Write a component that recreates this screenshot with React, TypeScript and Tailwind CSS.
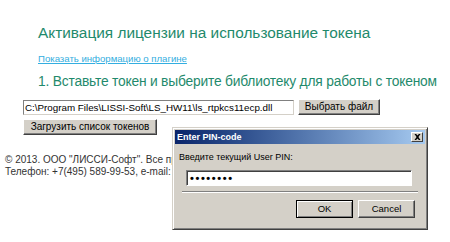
export default function App() {
  const btn =
    "bg-[#d4d0c8] text-[10px] leading-[12px] text-black whitespace-nowrap border border-t-white border-l-white border-r-[#404040] border-b-[#404040] shadow-[inset_-1px_-1px_0_#808080]";

  return (
    <div className="relative w-[450px] h-[242px] overflow-hidden bg-white font-['Liberation_Sans',Arial,sans-serif]">
      <div className="flex flex-col items-start">
        <h1 className="ml-[38px] mt-[24px] text-[15.4px] leading-[18px] text-[#1f8a6c] whitespace-nowrap">
          Активация лицензии на использование токена
        </h1>
        <a className="ml-[38px] mt-[11px] text-[9.6px] leading-[12px] text-[#33aee0] underline whitespace-nowrap">
          Показать информацию о плагине
        </a>
        <h2 className="ml-[38px] mt-[8px] text-[13.8px] leading-[18px] tracking-[-0.2px] text-[#1f8a6c] whitespace-nowrap">
          1. Вставьте токен и выберите библиотеку для работы с токеном
        </h2>
        <div className="ml-[23px] mt-[8px] flex items-center gap-[4px]">
          <div className="w-[271px] h-[15px] border border-t-[#808080] border-l-[#808080] border-r-[#d4d0c8] border-b-[#d4d0c8] pl-[1px] text-[9.8px] leading-[13px] text-black whitespace-nowrap overflow-hidden">
            C:\Program Files\LISSI-Soft\LS_HW11\ls_rtpkcs11ecp.dll
          </div>
          <button className={`${btn} w-[82px] h-[16px]`}>Выбрать файл</button>
        </div>
        <div className="ml-[23px] mt-[4px] flex">
          <button className={`${btn} w-[134px] h-[16px]`}>Загрузить список токенов</button>
        </div>
        <div className="ml-[5px] mt-[19px] text-[10px] leading-[12px] text-[#333333] whitespace-nowrap">
          <p>© 2013. ООО "ЛИССИ-Софт". Все права защищены.</p>
          <p>
            Телефон: +7(495) 589-99-53, e-mail: <span className="text-[#33aee0] underline">info@lissi.ru</span>
          </p>
        </div>
      </div>

      <div className="absolute left-[172px] top-[127px] w-[256px] h-[103px] bg-[#d4d0c8] border border-t-[#d4d0c8] border-l-[#d4d0c8] border-r-[#404040] border-b-[#404040] shadow-[inset_1px_1px_0_#ffffff,inset_-1px_-1px_0_#808080] p-[2px] flex flex-col">
        <div className="h-[14px] flex items-center justify-between pl-[2px] pr-[2px] bg-gradient-to-r from-[#0a246a] to-[#a6caf0]">
          <span className="text-[9px] leading-[12px] font-bold text-white">Enter PIN-code</span>
          <span className="w-[12px] h-[10px] bg-[#d4d0c8] border border-t-white border-l-white border-r-[#404040] border-b-[#404040] flex items-center justify-center">
            <svg width="7" height="6" viewBox="0 0 7 6">
              <path d="M0.5 0h1.6L3.5 1.6 4.9 0h1.6L4.4 3 6.5 6H4.9L3.5 4.4 2.1 6H0.5l2.1-3z" fill="#000" />
            </svg>
          </span>
        </div>
        <div className="pl-[4px] mt-[8px] text-[9px] leading-[11px] text-black">Введите текущий User PIN:</div>
        <div className="ml-[11px] mt-[7px] w-[226px] h-[16px] bg-white border border-t-[#808080] border-l-[#808080] border-r-white border-b-white shadow-[inset_1px_1px_0_#404040] flex items-center pl-[3px] text-[11px] leading-[12px] font-bold tracking-[1.6px] text-black">
          ••••••••
        </div>
        <div className="mx-[7px] mt-[5px] h-[2px] border-t border-t-[#808080] border-b border-b-white" />
        <div className="mt-[7px] flex justify-end gap-[5px] pr-[10px]">
          <button className="w-[57px] h-[18px] bg-[#d4d0c8] text-[9.5px] text-black border border-black shadow-[inset_1px_1px_0_#ffffff,inset_-1px_-1px_0_#808080]">OK</button>
          <button className="w-[57px] h-[18px] bg-[#d4d0c8] text-[9.5px] text-black border border-t-white border-l-white border-r-[#404040] border-b-[#404040] shadow-[inset_-1px_-1px_0_#808080]">Cancel</button>
        </div>
      </div>
    </div>
  );
}
